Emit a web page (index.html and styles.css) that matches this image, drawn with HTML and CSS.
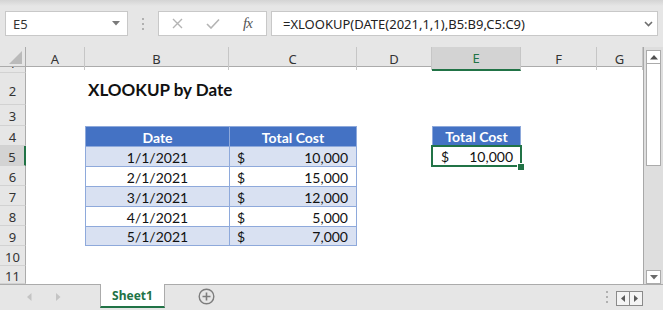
FILE: index.html
```html
<!DOCTYPE html>
<html lang="en">
<head>
    <meta charset="UTF-8">
    <title>XLOOKUP by Date</title>
    <link rel="stylesheet" href="styles.css">
</head>
<body>
    <div class="toolbar">
        <div class="namebox">
            <span>E5</span>
            <svg width="8" height="5" viewBox="0 0 8 5"><polygon points="0,0 8,0 4,4.5" fill="#7a7a7a"/></svg>
        </div>
        <div class="grip"><i></i><i></i><i></i></div>
        <div class="fbtns">
            <svg width="11" height="11" viewBox="0 0 11 11"><path d="M1 1 L10 10 M10 1 L1 10" stroke="#b4b4b4" stroke-width="1.4"/></svg>
            <svg width="14" height="11" viewBox="0 0 14 11"><path d="M1 6 L5 10 L13 1.5" stroke="#b4b4b4" stroke-width="1.6" fill="none"/></svg>
            <span class="fx">fx</span>
        </div>
        <div class="formula">
            <span>=XLOOKUP(DATE(2021,1,1),B5:B9,C5:C9)</span>
            <svg width="9" height="6" viewBox="0 0 9 6"><path d="M1 1 L4.5 4.5 L8 1" stroke="#6e6e6e" stroke-width="1.6" fill="none"/></svg>
        </div>
    </div>

    <div class="main">
        <div class="sheet">
            <div class="row head">
                <div class="corner"><svg width="25" height="19" viewBox="0 0 25 19"><polygon points="22,4 22,17 9,17" fill="#bababa"/></svg></div>
                <div class="ch">A</div>
                <div class="ch">B</div>
                <div class="ch">C</div>
                <div class="ch">D</div>
                <div class="ch on">E</div>
                <div class="ch">F</div>
                <div class="ch">G</div>
            </div>
            <div class="row r1"><div class="rh"><span>1</span></div></div>
            <div class="row r2">
                <div class="rh">2</div>
                <div class="b title">XLOOKUP by Date</div>
            </div>
            <div class="row r3"><div class="rh">3</div></div>
            <div class="row">
                <div class="rh">4</div>
                <div class="b t th">Date</div>
                <div class="c t th last">Total Cost</div>
                <div class="e th out">Total Cost</div>
            </div>
            <div class="row">
                <div class="rh on">5</div>
                <div class="b t band">1/1/2021</div>
                <div class="c t band last acct"><span>$</span><span>10,000</span></div>
                <div class="e acct sel"><span>$</span><span>10,000</span></div>
            </div>
            <div class="row">
                <div class="rh">6</div>
                <div class="b t">2/1/2021</div>
                <div class="c t last acct"><span>$</span><span>15,000</span></div>
            </div>
            <div class="row">
                <div class="rh">7</div>
                <div class="b t band">3/1/2021</div>
                <div class="c t band last acct"><span>$</span><span>12,000</span></div>
            </div>
            <div class="row">
                <div class="rh">8</div>
                <div class="b t">4/1/2021</div>
                <div class="c t last acct"><span>$</span><span>5,000</span></div>
            </div>
            <div class="row">
                <div class="rh">9</div>
                <div class="b t band bottom">5/1/2021</div>
                <div class="c t band last bottom acct"><span>$</span><span>7,000</span></div>
            </div>
            <div class="row"><div class="rh">10</div></div>
            <div class="row r11"><div class="rh">11</div></div>
        </div>
        <div class="vscroll">
            <div class="sbtn up"><svg width="8" height="5" viewBox="0 0 8 5"><polygon points="0,4.5 8,4.5 4,0" fill="#505050"/></svg></div>
            <div class="thumb"></div>
            <div class="track"></div>
            <div class="sbtn"><svg width="8" height="5" viewBox="0 0 8 5"><polygon points="0,0 8,0 4,4.5" fill="#6a6a6a"/></svg></div>
        </div>
    </div>

    <div class="tabbar">
        <div class="tabnav">
            <svg width="5" height="8" viewBox="0 0 5 8"><polygon points="4.5,0 4.5,8 0,4" fill="#c4c4c4"/></svg>
            <svg width="5" height="8" viewBox="0 0 5 8"><polygon points="0,0 0,8 4.5,4" fill="#c4c4c4"/></svg>
        </div>
        <div class="tab">Sheet1</div>
        <div class="addsheet">
            <svg width="17" height="17" viewBox="0 0 17 17"><circle cx="8.5" cy="8.5" r="7.3" fill="none" stroke="#7c7c7c" stroke-width="1.4"/><path d="M8.5 4.5 V12.5 M4.5 8.5 H12.5" stroke="#7c7c7c" stroke-width="1.6"/></svg>
        </div>
        <div class="spacer"></div>
        <div class="grip small"><i></i><i></i><i></i></div>
        <div class="hnav">
            <div><svg width="4" height="7" viewBox="0 0 4 7"><polygon points="4,0 4,7 0,3.5" fill="#5a5a5a"/></svg></div>
            <div><svg width="4" height="7" viewBox="0 0 4 7"><polygon points="0,0 0,7 4,3.5" fill="#5a5a5a"/></svg></div>
        </div>
    </div>
</body>
</html>
```

FILE: styles.css
```css
* {
    box-sizing: border-box;
}

body {
    margin: 0;
    width: 663px;
    height: 310px;
    overflow: hidden;
    background: #e6e6e6;
    font-family: "Noto Sans", "Open Sans", sans-serif;
    color: #333;
}

/* formula bar */
.toolbar {
    height: 47px;
    display: flex;
    align-items: center;
    padding: 0 5px;
    background: linear-gradient(#d4d4d4, #e6e6e6 6px);
}

.namebox {
    width: 123px;
    height: 25px;
    background: #fff;
    border: 1px solid #c8c8c8;
    display: flex;
    align-items: center;
    justify-content: space-between;
    padding: 0 7px 0 7px;
    font-size: 13px;
}

.grip {
    width: 30px;
    display: flex;
    flex-direction: column;
    align-items: center;
    gap: 3px;
}

.grip i {
    width: 2px;
    height: 2px;
    background: #b0b0b0;
}

.fbtns {
    width: 109px;
    height: 25px;
    background: #fff;
    border: 1px solid #c8c8c8;
    display: flex;
    align-items: center;
    gap: 23px;
    padding-left: 13px;
    margin-right: 4px;
}

.fx {
    font-family: "Liberation Serif", serif;
    font-style: italic;
    font-size: 15px;
    color: #555;
    letter-spacing: -1px;
}

.formula {
    width: 387px;
    height: 25px;
    background: #fff;
    border: 1px solid #c8c8c8;
    display: flex;
    align-items: center;
    justify-content: space-between;
    padding: 0 4px 0 11px;
    font-size: 13px;
    color: #222;
}

/* grid */
.main {
    display: flex;
    height: 237px;
}

.sheet {
    width: 643px;
    background: #fff;
}

.row {
    display: grid;
    grid-template-columns: 26px 59px 144px 128px 75px 89px 76px 46px;
    height: 20px;
    font-family: Lato, "Liberation Sans", sans-serif;
    font-size: 14px;
    color: #111;
}

.row.head {
    background: #e6e6e6;
    border-bottom: 1px solid #ababab;
    font-family: "Noto Sans", sans-serif;
    font-size: 13px;
    color: #333;
}

.corner {
    border-right: 1px solid #ababab;
}

.ch {
    display: flex;
    align-items: center;
    justify-content: center;
    border-right: 1px solid #c6c6c6;
}

.ch.on {
    background: #d3d3d3;
    color: #217346;
    border-bottom: 2px solid #217346;
    margin-bottom: -1px;
}

.rh {
    grid-column: 1;
    display: flex;
    align-items: center;
    justify-content: center;
    padding-top: 2px;
    background: #e6e6e6;
    border-right: 1px solid #ababab;
    border-bottom: 1px solid #d2d2d2;
    font-family: "Noto Sans", sans-serif;
    font-size: 13px;
    color: #333;
    overflow: hidden;
}

.rh.on {
    background: #d3d3d3;
    border-right: 2px solid #217346;
}

.r1 {
    height: 6px;
}

.r1 .rh {
    align-items: flex-end;
    padding-top: 0;
}

.r1 .rh span {
    display: block;
    flex: none;
    height: 20px;
    line-height: 22px;
}

.r2 {
    height: 32px;
}

.r2 .rh {
    padding-top: 4px;
}

.r3 {
    height: 21px;
}

.r11 {
    height: 18px;
}

.b {
    grid-column: 3;
}

.c {
    grid-column: 4;
}

.e {
    grid-column: 6;
}

.title {
    align-self: end;
    padding: 0 0 5px 3px;
    white-space: nowrap;
    font-weight: bold;
    font-size: 17px;
}

/* table cells */
.t {
    border-left: 1px solid #8ea9db;
    border-top: 1px solid #8ea9db;
    display: flex;
    align-items: center;
    justify-content: center;
    padding-top: 1px;
}

.t.last {
    border-right: 1px solid #8ea9db;
}

.t.bottom {
    border-bottom: 1px solid #8ea9db;
}

.band {
    background: #d9e1f2;
}

.th {
    background: #4472c4;
    color: #fff;
    font-weight: bold;
    display: flex;
    align-items: center;
    justify-content: center;
}

.th.out {
    border: 1px solid #8ea9db;
    border-bottom: none;
}

.acct {
    display: flex;
    align-items: center;
    justify-content: space-between;
    padding: 1px 8px 0 7px;
}

.sel {
    position: relative;
    padding: 0 8px 0 9px;
}

.sel::before {
    content: "";
    position: absolute;
    inset: -1px;
    border: 2px solid #217346;
}

.sel::after {
    content: "";
    position: absolute;
    right: -3px;
    bottom: -4px;
    width: 6px;
    height: 6px;
    background: #217346;
    border-left: 1px solid #fff;
    border-top: 1px solid #fff;
}

/* vertical scrollbar */
.vscroll {
    width: 20px;
    border-left: 1px solid #a8a8a8;
    background: #dedede;
    display: flex;
    flex-direction: column;
    padding: 3px 2px 0 2px;
}

.sbtn {
    height: 14px;
    background: #fff;
    border: 1px solid #ababab;
    display: flex;
    align-items: center;
    justify-content: center;
}

.thumb {
    height: 102px;
    background: #fff;
    border: 1px solid #ababab;
    border-top: none;
}

.track {
    flex: 1;
}

/* sheet tabs */
.tabbar {
    height: 26px;
    border-top: 1px solid #ababab;
    display: flex;
    padding-bottom: 2px;
}

.tabnav {
    width: 100px;
    display: flex;
    align-items: center;
    gap: 24px;
    padding-left: 27px;
}

.tab {
    width: 65px;
    margin-top: -1px;
    background: #fff;
    border-left: 1px solid #ababab;
    border-right: 1px solid #ababab;
    border-bottom: 2px solid #217346;
    display: flex;
    align-items: center;
    justify-content: center;
    font-size: 12px;
    font-weight: bold;
    color: #217346;
}

.addsheet {
    display: flex;
    align-items: center;
    padding-left: 33px;
}

.spacer {
    flex: 1;
}

.grip.small {
    width: 16px;
    justify-content: center;
}

.hnav {
    width: 27px;
    height: 15px;
    margin: 6px 20px 0 1px;
    display: flex;
    border: 1px solid #8a8a8a;
    background: #f4f4f4;
}

.hnav div {
    flex: 1;
    display: flex;
    align-items: center;
    justify-content: center;
}

.hnav div + div {
    border-left: 1px solid #8a8a8a;
}
```
